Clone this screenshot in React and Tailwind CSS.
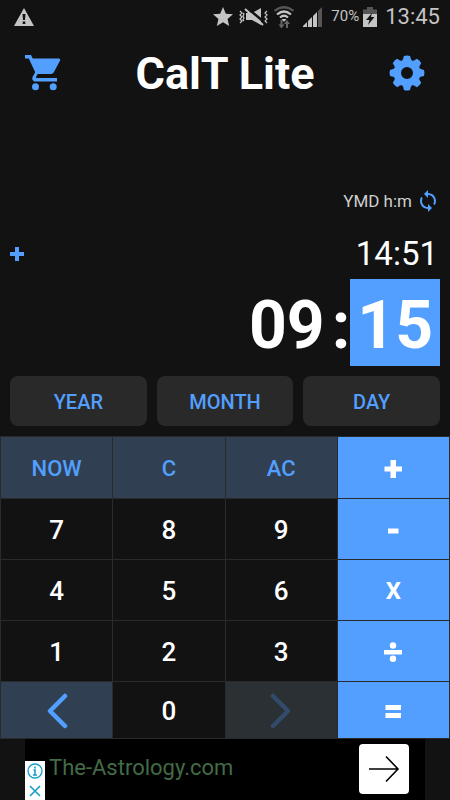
import React, { useState } from 'react';
import { MdSync, MdStar } from 'react-icons/md';

const GEAR_ANGLES = [0, 45, 90, 135, 180, 225, 270, 315];

const GearIcon = () => (
  <svg viewBox="-18 -18 36 36" className="size-9" fill="#529fff" aria-hidden="true">
    <circle r="9.5" fill="none" stroke="#529fff" strokeWidth="7" />
    {GEAR_ANGLES.map(a => (
      <path key={a} transform={`rotate(${a})`} d="M-5.5 -11.5 Q-3.6 -13.2 -3.1 -17 Q0 -18 3.1 -17 Q3.600 -13.2 5.5 -11.5Z" />
    ))}
  </svg>
);

const CartIcon = () => (
  <svg viewBox="0 0 36 36" className="size-9" fill="#529fff" aria-hidden="true">
    <path d="M0 0h6l1.700 3.600H33.500q2.200 0 1.500 2.200L28.800 17.200q-.9 1.800-2.900 1.800H12.600l-1.700 3.300q0 .7.700.7H32v3.500H10.500C7.800 26.500 6.500 24 7.800 21.500L10.200 17.200 3.800 3.600H0z" />
    <circle cx="10.500" cy="31.800" r="3.500" />
    <circle cx="28.200" cy="31.800" r="3.500" />
  </svg>
);

const WarningIcon = () => (
  <svg viewBox="0 0 20 18" className="h-[18px] w-5" aria-hidden="true">
    <path d="M10 0l10 18H0z" fill="#c4c4c4" />
    <path d="M8.500 6h3l-.5 6H9zM8.700 13.500h2.600V16H8.700z" fill="#121212" />
  </svg>
);

const MutedIcon = () => (
  <svg viewBox="0 0 30 20" className="h-5 w-[30px]" fill="none" aria-hidden="true">
    <path d="M1 4l2 2-2 2 2 2-2 2 2 2-2 2M4 6l1 1-1 2 1 2-1 2 1 1M28 4l-2 2 2 2-2 2 2 2-2 2 2 2" stroke="#c4c4c4" strokeWidth="1.200" />
    <path d="M7 6h6l9-5v17l-9-5H7z" fill="#c4c4c4" />
    <path d="M7 0l18 15" stroke="#121212" strokeWidth="2.500" />
    <path d="M6 2l18 16" stroke="#c4c4c4" strokeWidth="2" />
  </svg>
);

const WifiIcon = () => (
  <svg viewBox="0 0 22 24" className="h-6 w-[22px]" fill="none" aria-hidden="true">
    <path d="M1.500 6Q11 -1.500 20.500 6" stroke="#555" strokeWidth="2.200" />
    <path d="M4 9.500Q11 3.500 18 9.500M7 12.500Q11 9 15 12.500" stroke="#c4c4c4" strokeWidth="2.200" />
    <path d="M8.500 14h5L11 17z" fill="#c4c4c4" />
    <path d="M8.500 15v6M14 23v-6" stroke="#666" strokeWidth="2" />
    <path d="M5.500 19.500h6L8.500 23.500zM11 19h6L14 15z" fill="#666" />
  </svg>
);

const SignalIcon = () => (
  <svg viewBox="0 0 20 20" className="size-5" aria-hidden="true">
    <path d="M0 20v-1l4-4v5zM5 20v-6l4-4v10zM10 20V9l4-4v15z" fill="#c4c4c4" />
    <path d="M15 20V4l4-4v20z" fill="#555" />
  </svg>
);

const BatteryIcon = () => (
  <svg viewBox="0 0 14 20" className="h-5 w-3.5" aria-hidden="true">
    <path d="M4 0h6v2.500h4V7H0V2.500h4z" fill="#555" />
    <path d="M0 7h14v13H0z" fill="#c4c4c4" />
    <path d="M9 6L3 13h3.500L5 18l6.500-8H8z" fill="#121212" />
  </svg>
);

const Chevron = ({ flip, color }) => (
  <svg viewBox="0 0 22 36" className="h-9 w-[22px]" fill="none" stroke={color} strokeWidth="4.500" strokeLinecap="round" strokeLinejoin="round" aria-hidden="true">
    <path d={flip ? 'M3 3L18 18 3 33' : 'M19 3L4 18 19 33'} />
  </svg>
);

const OpIcon = ({ d, dots }) => (
  <svg viewBox="0 0 20 20" className="size-5" fill="#fff" aria-hidden="true">
    <path d={d} />
    {dots && <circle cx="10" cy="3.500" r="3.200" />}
    {dots && <circle cx="10" cy="16.800" r="3.200" />}
  </svg>
);

const units = ['YEAR', 'MONTH', 'DAY'];

const keys = [
  { id: 'NOW', type: 'action' }, { id: 'C', type: 'action' }, { id: 'AC', type: 'action' }, { id: '+', type: 'op' },
  { id: '7' }, { id: '8' }, { id: '9' }, { id: '-', type: 'op' },
  { id: '4' }, { id: '5' }, { id: '6' }, { id: 'X', type: 'op' },
  { id: '1' }, { id: '2' }, { id: '3' }, { id: '÷', type: 'op' },
  { id: 'back', type: 'action', label: 'Previous field', icon: <Chevron color="#529fff" /> },
  { id: '0' },
  { id: 'next', type: 'off', label: 'Next field', icon: <Chevron flip color="#324b6b" /> },
  { id: '=', type: 'op' },
];

// operators that are drawn as bars instead of typed
const opIcons = {
  '+': <OpIcon d="M7.500 1h5.500v6.500h6v5h-6V19H7.500v-6.500H1.500v-5h6z" />,
  '-': <OpIcon d="M5 8.500h10.500v5H5z" />,
  '÷': <OpIcon d="M1 8h18v4.500H1z" dots />,
  '=': <OpIcon d="M2.500 4h15.500v5H2.500zM2.500 12h15.500v5H2.500z" />,
};

const keyStyles = {
  action: 'bg-[#303f51] text-[22px] font-medium text-[#529fff]',
  op: 'bg-[#529fff] text-[24px] font-bold text-white',
  off: 'bg-[#2b3035]',
  digit: 'bg-[#121212] text-[26px] font-medium text-white',
};

const StatusBar = () => (
  <div className="flex h-[33px] items-center justify-between pr-2.5 pl-3.5 text-[#c4c4c4]">
    <WarningIcon />
    <div className="flex items-center gap-1">
      <MdStar className="size-6" />
      <MutedIcon />
      <WifiIcon />
      <div className="pl-1"><SignalIcon /></div>
      <span className="pl-1 text-[15px]">70%</span>
      <BatteryIcon />
      <span className="pl-1 text-[22px]">13:45</span>
    </div>
  </div>
);

const AdBanner = () => (
  <div className="mx-[25px] flex h-[62px] items-center justify-between bg-black pr-4">
    <div className="flex h-full items-end">
      <div className="flex h-10 w-5 flex-col items-center justify-around bg-white">
        <svg viewBox="0 0 16 16" className="size-4" fill="none" stroke="#14a0cc" strokeWidth="1.300" aria-hidden="true">
          <circle cx="8" cy="8" r="7" />
          <path d="M8 3.500v2M6.500 7H8v5M6 12h4" strokeWidth="1.600" />
        </svg>
        <svg viewBox="0 0 16 16" className="size-4" stroke="#14a0cc" strokeWidth="1.600" aria-hidden="true">
          <path d="M3 3l10 10M13 3L3 13" />
        </svg>
      </div>
      <a href="#ad" className="self-center pb-1.5 pl-1 text-[22px] text-[#426b46]">The-Astrology.com</a>
    </div>
    <button aria-label="Open" className="mb-0.5 flex size-[50px] items-center justify-center rounded-sm bg-white">
      <svg viewBox="0 0 32 28" className="h-7 w-8" fill="none" stroke="#000" strokeWidth="1.600" aria-hidden="true">
        <path d="M1 14h29M18 1.500L30 14 18 26.500" />
      </svg>
    </button>
  </div>
);

const App = () => {
  const [minutes, setMinutes] = useState('15');

  // Typing a digit shifts it into the selected field
  const handleKey = (key) => {
    if (/^\d$/.test(key.id)) setMinutes((minutes + key.id).slice(-2));
    if (key.id === 'C' || key.id === 'AC') setMinutes('00');
  };

  return (
    <div className="min-h-screen bg-[#121212] font-['Roboto',sans-serif] text-white">
      <StatusBar />

      <header className="flex h-20 items-center justify-between px-[25px]">
        <button aria-label="Shop"><CartIcon /></button>
        <h1 className="pt-0.5 text-[45px] font-bold">CalT Lite</h1>
        <button aria-label="Settings"><GearIcon /></button>
      </header>

      <main>
        <div className="px-2.5 pt-[75px]">
          <div className="flex items-center justify-end gap-1 text-[17px] leading-[26px] text-[#cfcfcf]">
            <span>YMD h:m</span>
            <button aria-label="Change format"><MdSync className="size-6 text-[#529fff]" /></button>
          </div>
          <div className="flex h-[65px] items-center justify-between pt-3.5">
            <svg viewBox="0 0 14 14" className="size-3.5" fill="#529fff" aria-label="plus">
              <path d="M5 0h4v5h5v4H9v5H5V9H0V5h5z" />
            </svg>
            <span className="pr-0.5 text-[33px]">14:51</span>
          </div>
          <div className="flex justify-end text-[66px] leading-[81px] font-bold">
            <span className="px-[7px] pt-1.5">09</span>
            <span className="pt-1.5">:</span>
            <span className="bg-[#529fff] px-[7px] pt-1.5">{minutes}</span>
          </div>
        </div>

        <div className="grid grid-cols-3 gap-2.5 p-2.5">
          {units.map(u => (
            <button key={u} className="h-[50px] rounded-lg bg-[#292929] pt-0.5 text-[20px] font-medium text-[#529fff]">{u}</button>
          ))}
        </div>

        <div className="grid grid-cols-4 grid-rows-[61px_60px_60px_60px_56px] gap-px bg-[#2a2a2a] p-px">
          {keys.map(key => (
            <button
              key={key.id}
              aria-label={key.label}
              disabled={key.type === 'off'}
              onClick={() => handleKey(key)}
              className={`flex items-center justify-center pt-0.5 ${keyStyles[key.type || 'digit']}`}
            >
              {key.icon || opIcons[key.id] || key.id}
            </button>
          ))}
        </div>
      </main>

      <AdBanner />
    </div>
  );
};

export default App;
